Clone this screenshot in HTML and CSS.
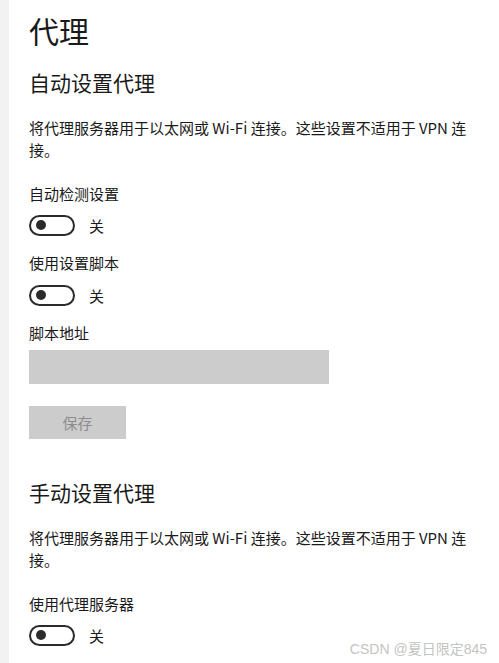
FILE: index.html
```html
<!DOCTYPE html>
<html>
	<head>
		<meta charset="UTF-8">
		<title>代理</title>
		<link rel="stylesheet" href="styles.css">
	</head>
	<body>
		<div class="window">
			<div class="side"></div>
			<div class="content">
				<h1 class="title">代理</h1>

				<h2 class="group">自动设置代理</h2>
				<p class="desc">将代理服务器用于以太网或 Wi-Fi 连接。这些设置不适用于 VPN 连接。</p>

				<p class="label">自动检测设置</p>
				<div class="switch-row first">
					<div class="switch"><span class="knob"></span></div>
					<span class="state">关</span>
				</div>

				<p class="label">使用设置脚本</p>
				<div class="switch-row">
					<div class="switch"><span class="knob"></span></div>
					<span class="state">关</span>
				</div>

				<p class="label">脚本地址</p>
				<div class="textbox"></div>
				<div class="btn">保存</div>

				<h2 class="group second">手动设置代理</h2>
				<p class="desc">将代理服务器用于以太网或 Wi-Fi 连接。这些设置不适用于 VPN 连接。</p>

				<p class="label first">使用代理服务器</p>
				<div class="switch-row first">
					<div class="switch"><span class="knob"></span></div>
					<span class="state">关</span>
				</div>
			</div>
		</div>
		<div class="mark">CSDN @夏日限定845</div>
	</body>
</html>
```

FILE: styles.css
```css
html, body{
	margin: 0;
	padding: 0;
	background: #fff;
}
body{
	font-family: "Noto Sans CJK SC", "Noto Sans", sans-serif;
	color: #1a1a1a;
	width: 499px;
	height: 663px;
	overflow: hidden;
	position: relative;
}
.window{
	display: flex;
	height: 663px;
}
.side{
	width: 10px;
	background-color: #f2f2f2;
}
.content{
	flex: 1;
	padding: 10px 20px 0 20px;
}
.title{
	margin: 0;
	font-size: 30px;
	font-weight: normal;
	line-height: 40px;
}
.group{
	margin: 17px 0 0 0;
	font-size: 21px;
	font-weight: normal;
	line-height: 30px;
}
.group.second{
	margin-top: 38px;
}
.desc{
	margin: 20px 0 0 0;
	font-size: 15px;
	line-height: 22px;
	width: 450px;
}
.label{
	margin: 16px 0 0 0;
	font-size: 15px;
	line-height: 22px;
}
.desc + .label{
	margin-top: 22px;
}
.switch-row{
	display: flex;
	align-items: center;
	height: 22px;
	margin-top: 10px;
}
.switch-row.first{
	margin-top: 9px;
}
.switch{
	width: 42px;
	height: 17px;
	border: 2px solid #2b2b2b;
	border-radius: 11px;
	display: flex;
	align-items: center;
	padding-left: 5px;
	box-sizing: content-box;
	width: 37px;
}
.knob{
	width: 10px;
	height: 10px;
	border-radius: 50%;
	background-color: #2b2b2b;
}
.state{
	margin-left: 14px;
	font-size: 15px;
}
.textbox{
	margin-top: 6px;
	width: 300px;
	height: 34px;
	background-color: #cccccc;
}
.btn{
	margin-top: 22px;
	width: 97px;
	height: 33px;
	line-height: 33px;
	text-align: center;
	font-size: 15px;
	color: #8c8c8c;
	background-color: #cccccc;
}
.mark{
	position: absolute;
	right: 12px;
	bottom: 5px;
	font-size: 14px;
	color: #c4c4c4;
	font-family: "Liberation Sans", "Noto Sans CJK SC", sans-serif;
}
```
